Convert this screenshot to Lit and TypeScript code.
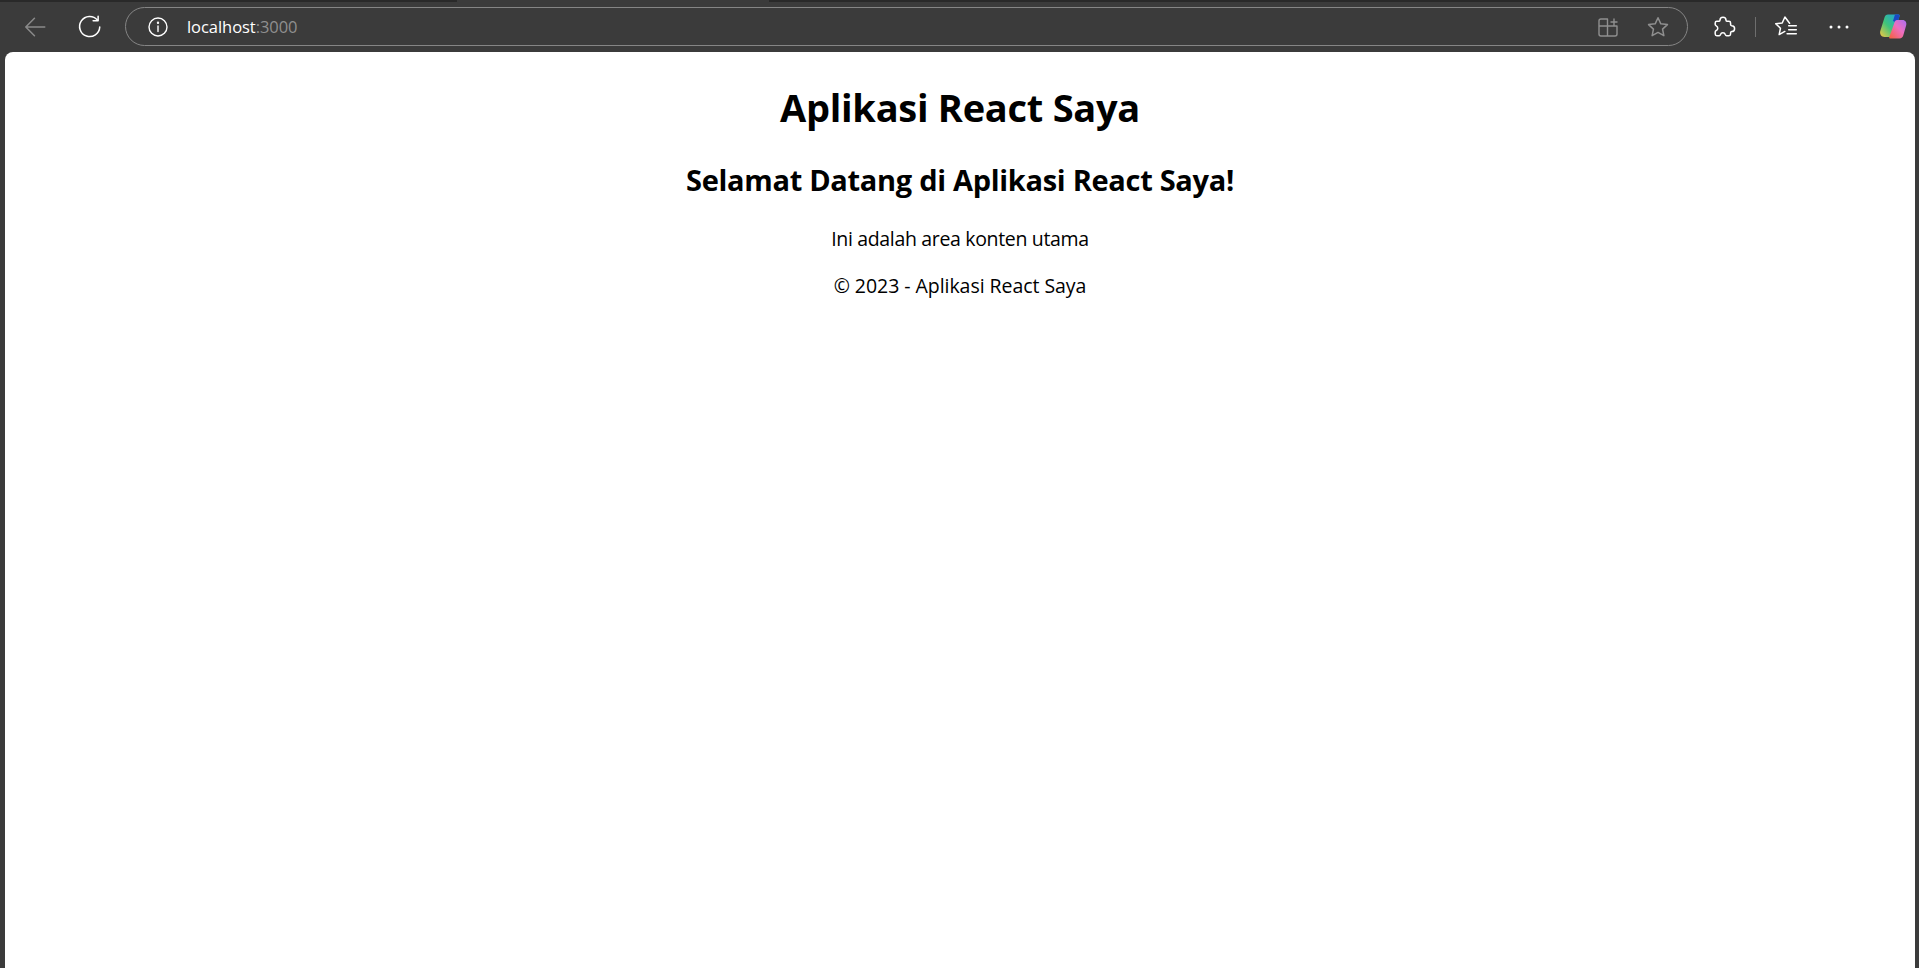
import { LitElement, html, css, svg } from "lit";
import { customElement } from "lit/decorators.js";

const ic = (w: number, body: unknown) =>
  html`<svg width=${w} height=${w} viewBox="0 0 24 24" fill="none" stroke="currentColor" stroke-width="1.4" stroke-linecap="round" stroke-linejoin="round">${body}</svg>`;

@customElement("app-root")
export class AppRoot extends LitElement {
  static styles = css`
    :host { display: flex; flex-direction: column; height: 968px; background: #3b3b3b; overflow: hidden; font-family: "Open Sans", "Noto Sans", sans-serif; }
    .tabstrip { height: 2px; display: flex; background: #292929; }
    .tabstrip .gap { width: 312px; margin-left: 457px; background: #3b3b3b; }
    .toolbar { height: 50px; display: flex; align-items: center; padding: 0 6px 1px 15px; box-sizing: border-box; }
    .btn { width: 40px; height: 40px; flex: none; display: flex; align-items: center; justify-content: center; color: #fff; }
    .btn.dim { color: #8a8a8a; }
    .reload { margin-left: 15px; }
    .pill { flex: 1; height: 39px; margin-left: 15px; box-sizing: border-box; border: 1.5px solid #858585; border-radius: 20px; display: flex; align-items: center; padding: 0 4px 0 12px; }
    .pill .info { width: 40px; display: flex; justify-content: center; color: #fff; }
    .url { margin-left: 9px; font: 16.5px "Open Sans", sans-serif; letter-spacing: -0.05px; color: #fff; flex: 1; }
    .url span { color: #8f8f8f; }
    .inner { width: 50px; display: flex; justify-content: center; color: #8f8f8f; }
    .puzzle { margin-left: 15px; }
    .divider { width: 1px; height: 20px; background: #6e6e6e; margin: 0 10px 0 12px; flex: none; }
    .dots { margin-left: 13px; }
    .copilot { margin-left: 14px; }
    .page { flex: 1; margin: 0 4px 0 5px; background: #fff; border-radius: 8px 8px 0 0; text-align: center; color: #000; padding-top: 1px; }
    h1 { font-size: 38px; line-height: 54px; font-weight: 700; margin: 27px 0 0; letter-spacing: -0.27px; }
    h2 { font-size: 29px; line-height: 40px; font-weight: 700; margin: 26px 0 0; letter-spacing: -0.3px; }
    p { font-size: 19.5px; line-height: 27px; margin: 25px 0 0; letter-spacing: -0.33px; }
    p.foot { margin-top: 20px; letter-spacing: -0.05px; }
  `;

  render() {
    return html`
      <div class="tabstrip"><div class="gap"></div></div>
      <div class="toolbar">
        <div class="btn dim">${ic(26, svg`<path d="M21 12H3.500M11.500 4l-8 8 8 8"/>`)}</div>
        <div class="btn reload">${ic(26, svg`<path d="M18.800 5.500A9.300 9.300 0 1 0 21 12"/><path d="M19.500 2v4.300h-4.600"/>`)}</div>
        <div class="pill">
          <div class="info">${ic(24, svg`<circle cx="12" cy="12" r="9"/><path d="M12 11v5.500"/><circle cx="12" cy="7.800" r=".5" fill="currentColor"/>`)}</div>
          <div class="url">localhost<span>:3000</span></div>
          <div class="inner">${ic(24, svg`<path d="M11.500 4H5a2 2 0 0 0-2 2v13a2 2 0 0 0 2 2h14a2 2 0 0 0 2-2v-8H3M11.500 4v17M15 7h6M18 4v6"/>`)}</div>
          <div class="inner">${ic(26, svg`<path d="M12 3.500l2.600 5.600 6.100.7-4.500 4.200 1.200 6L12 17l-5.400 3 1.200-6-4.500-4.200 6.100-.7z"/>`)}</div>
        </div>
        <div class="btn puzzle">${ic(26, svg`<path d="M9.200 5.800a2.800 2.800 0 0 1 5.600 0c.1.6.5.9 1.100.9h1.600a1.500 1.500 0 0 1 1.500 1.500v1.500c0 .6.4 1 1 1.100a2.700 2.700 0 0 1 0 5.400c-.6.1-1 .5-1 1.100v1.200a1.500 1.500 0 0 1-1.500 1.500h-2.200c-.7 0-1-.5-1.200-1.100a2.300 2.300 0 0 0-4.400 0c-.2.6-.5 1.100-1.200 1.100H6.300a1.500 1.500 0 0 1-1.500-1.500v-2c0-.7.500-1 1-1.300a2.300 2.300 0 0 0 0-4.200c-.5-.3-1-.6-1-1.300V8.200a1.500 1.500 0 0 1 1.500-1.500h1.800c.6 0 1-.3 1.100-.9z"/>`)}</div>
        <div class="divider"></div>
        <div class="btn">${ic(26, svg`<path d="M15.300 8.600L11 2.800 8.500 8.300l-6 .7 4.400 4.100-1.200 5.900 5.200-2.900"/><path d="M14.500 10.800h7M14.500 14.500h7M13 18.200h8.500"/>`)}</div>
        <div class="btn dots"><svg width="22" height="6" viewBox="0 0 22 6" fill="#fff"><circle cx="3" cy="3" r="1.500"/><circle cx="11" cy="3" r="1.500"/><circle cx="19" cy="3" r="1.500"/></svg></div>
        <div class="btn copilot"><svg width="28" height="28" viewBox="0 0 28 28">
          <defs>
            <linearGradient id="a" x1="0" y1="1" x2="1" y2="0"><stop offset="0" stop-color="#f5c842"/><stop offset=".45" stop-color="#3fc47a"/><stop offset="1" stop-color="#1b9fe8"/></linearGradient>
            <linearGradient id="b" x1="0" y1="1" x2="1" y2="0"><stop offset="0" stop-color="#f5603a"/><stop offset=".55" stop-color="#ee6ec0"/><stop offset="1" stop-color="#a86ef0"/></linearGradient>
          </defs>
          <path fill="url(#a)" d="M9 1.500h10.500c1 0 1.400.8 1 1.800L15 21c-.6 1.800-1.800 3-3.500 3H5.500C2.500 24 .4 21 1.300 18L5.500 4.500C6 2.600 7.300 1.500 9 1.500z"/>
          <path fill="#1a48c4" d="M16 1.500h3.500c1 0 1.400.8 1 1.800L18.500 10 14 8z"/>
          <path fill="url(#b)" d="M18 7h5.500c2.800 0 4.500 2.500 3.700 5.300l-2.800 9.700c-.5 2-1.900 3.500-4 3.500h-9c-1.200 0-1.500-.8-1-1.800l5-14C16 8.100 16.600 7 18 7z"/>
        </svg></div>
      </div>
      <main class="page">
        <h1>Aplikasi React Saya</h1>
        <h2>Selamat Datang di Aplikasi React Saya!</h2>
        <p>Ini adalah area konten utama</p>
        <p class="foot">© 2023 - Aplikasi React Saya</p>
      </main>
    `;
  }
}
